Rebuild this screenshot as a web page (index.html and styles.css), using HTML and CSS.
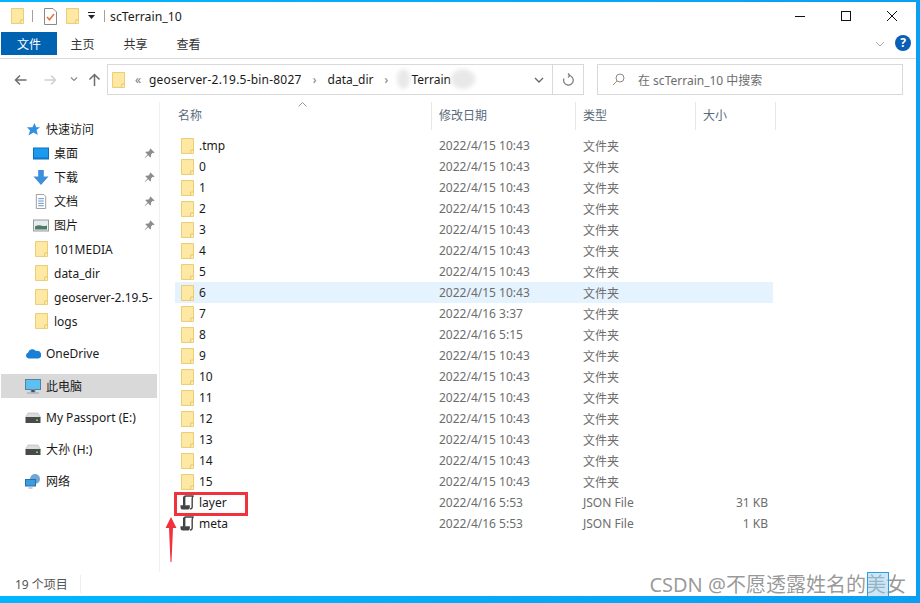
FILE: index.html
```html
<!DOCTYPE html>
<html lang="zh-CN">
<head>
  <meta charset="UTF-8" />
  <title>scTerrain_10</title>
  <link rel="stylesheet" href="styles.css">
</head>
<body>

<svg class="defs" width="0" height="0">
  <symbol id="folder" viewBox="0 0 14 17">
    <path d="M.5.5h13v12.5h-3v3.500H.5z" fill="#fde8a4" stroke="#e9c868"/>
    <path d="M10.500 16.500v-3.500h3v3.500z" fill="#fff3c4" stroke="#e9c868"/>
  </symbol>
  <symbol id="json" viewBox="0 0 16 16">
    <path d="M4 12V3.500Q4 1 6.500 1H14.500Q13 1.500 13 4V12.500Q13 15 10.500 15" fill="#fff" stroke="#444" stroke-width="1.500"/>
    <path d="M4.500 2V11" stroke="#444" stroke-width="2.500"/>
    <path d="M.5 11H10.500V12.500Q10.500 15.500 8 15.500H3Q.5 15.500 .5 13z" fill="#444"/>
  </symbol>
  <symbol id="pin" viewBox="0 0 12 12">
    <path d="M7 .5l4.500 4.500-1.200.6-.8-.3-2 2 .2 2.200-.8.8-2.400-2.500L1 11l-.3-.3 3.200-3.600L1.500 4.700l.8-.8 2.200.2 2-2-.3-.8z" fill="#8c8c8c"/>
  </symbol>
  <symbol id="drive" viewBox="0 0 16 12">
    <path d="M3 1.500h10l2.500 4.500h-15z" fill="#dcdcdc" stroke="#b5b5b5" stroke-width=".6"/>
    <rect x=".5" y="5.500" width="15" height="6" fill="#4a4a4a"/>
    <rect x="11" y="8" width="2" height="1.500" fill="#5fe05f"/>
  </symbol>
</svg>

<div class="window">

  <div class="titlebar">
    <svg class="ico-folder qa-first"><use href="#folder"/></svg>
    <span class="qa-sep"></span>
    <svg class="ico-doc" viewBox="0 0 13 17">
      <path d="M.5.500h8.500l3.500 3.500v12.500H.5z" fill="#fff" stroke="#8a8a8a"/>
      <path d="M3 9l2.500 2.800L10 6" fill="none" stroke="#e8703a" stroke-width="1.500"/>
    </svg>
    <svg class="ico-folder qa-next"><use href="#folder"/></svg>
    <svg class="qa-drop" viewBox="0 0 9 8">
      <rect x="1" y="0" width="7" height="1" fill="#222"/>
      <path d="M1 3h7L4.500 7z" fill="#222"/>
    </svg>
    <span class="qa-sep"></span>
    <span class="title">scTerrain_10</span>
    <div class="win-btns">
      <svg width="12" height="12" viewBox="0 0 12 12"><path d="M1 6.500h10" stroke="#111"/></svg>
      <svg width="12" height="12" viewBox="0 0 12 12"><rect x="1.500" y="1.500" width="9" height="9" fill="none" stroke="#111"/></svg>
      <svg width="12" height="12" viewBox="0 0 12 12"><path d="M1 1l10 10M11 1L1 11" stroke="#111"/></svg>
    </div>
  </div>

  <div class="ribbon">
    <span class="tab tab-file">文件</span>
    <span class="tab">主页</span>
    <span class="tab">共享</span>
    <span class="tab">查看</span>
    <svg class="ribbon-chev" viewBox="0 0 10 6"><path d="M1 1l4 4 4-4" fill="none" stroke="#a5a5a5"/></svg>
    <span class="help">?</span>
  </div>

  <div class="nav">
    <div class="nav-btns">
      <svg class="nav-back" viewBox="0 0 13 12"><path d="M12.500 6H1.500M6 1.500L1.500 6 6 10.500" fill="none" stroke="#6d6d6d" stroke-width="1.500"/></svg>
      <svg class="nav-fwd" viewBox="0 0 13 12"><path d="M.5 6h11M7 1.500L11.500 6 7 10.500" fill="none" stroke="#cfcfcf" stroke-width="1.500"/></svg>
      <svg class="nav-drop" viewBox="0 0 8 5"><path d="M1 .5l3 3 3-3" fill="none" stroke="#8a8a8a" stroke-width="1.200"/></svg>
      <svg class="nav-up" viewBox="0 0 13 13"><path d="M6.500 13V2M1.500 6.500l5-5 5 5" fill="none" stroke="#6d6d6d" stroke-width="1.500"/></svg>
    </div>
    <div class="address">
      <svg class="ico-folder addr-folder"><use href="#folder"/></svg>
      <span class="addr-more">«</span>
      <span class="crumb crumb-first">geoserver-2.19.5-bin-8027</span>
      <span class="addr-gt">›</span>
      <span class="crumb">data_dir</span>
      <span class="addr-gt">›</span>
      <span class="crumb crumb-hidden">Terrain</span>
      <svg class="addr-chev" viewBox="0 0 10 6"><path d="M1 1l4 4 4-4" fill="none" stroke="#666" stroke-width="1.300"/></svg>
      <span class="addr-refresh">
        <svg width="12" height="14" viewBox="0 0 12 14"><path d="M6.500 2.500A4.800 4.800 0 1 1 2 5.500M6 .5l2 2-2 2" fill="none" stroke="#7a7a7a" stroke-width="1.200"/></svg>
      </span>
    </div>
    <div class="search">
      <svg width="13" height="13" viewBox="0 0 13 13"><circle cx="8" cy="5" r="4" fill="none" stroke="#8a8a8a"/><path d="M5 8l-4 4" stroke="#b08a5a"/></svg>
      <span>在 scTerrain_10 中搜索</span>
    </div>
  </div>

  <div class="content">
    <div class="sidebar">
      <div class="side-row top">
        <svg class="side-ico" viewBox="0 0 16 14"><path d="M9.500.5l1.700 4.200H15l-3.400 2.900 1.200 4.900L8.500 10 3.500 13l1.600-5L2 4.700h5.500z" fill="#2f8fe0"/></svg>
        <span>快速访问</span>
      </div>
      <div class="side-row sub">
        <svg class="side-ico" viewBox="0 0 16 12"><rect x=".5" y=".5" width="15" height="11" fill="#1b9af0" stroke="#0f6fb8"/><path d="M1 10.500h14" stroke="#0f6fb8"/></svg>
        <span>桌面</span>
        <svg class="pin"><use href="#pin"/></svg>
      </div>
      <div class="side-row sub">
        <svg class="side-ico" viewBox="0 0 16 16"><path d="M5 0h6v7h5l-8 9-8-9h5z" fill="#3d8fdc"/></svg>
        <span>下载</span>
        <svg class="pin"><use href="#pin"/></svg>
      </div>
      <div class="side-row sub">
        <svg class="side-ico" viewBox="0 0 16 16"><path d="M3 .5h8l2 2v13H3z" fill="#fff" stroke="#999"/><path d="M5 5h6M5 7.500h6M5 10h6M5 12.500h6" stroke="#5a8fc0"/></svg>
        <span>文档</span>
        <svg class="pin"><use href="#pin"/></svg>
      </div>
      <div class="side-row sub">
        <svg class="side-ico" viewBox="0 0 16 12"><rect x=".5" y=".5" width="15" height="11" fill="#e4edf0" stroke="#9a9a9a"/><path d="M2 7q3-2 6-1t6 0v4H2z" fill="#4e7a68"/></svg>
        <span>图片</span>
        <svg class="pin"><use href="#pin"/></svg>
      </div>
      <div class="side-row sub">
        <svg class="ico-folder side-folder"><use href="#folder"/></svg>
        <span>101MEDIA</span>
      </div>
      <div class="side-row sub">
        <svg class="ico-folder side-folder"><use href="#folder"/></svg>
        <span>data_dir</span>
      </div>
      <div class="side-row sub">
        <svg class="ico-folder side-folder"><use href="#folder"/></svg>
        <span>geoserver-2.19.5-</span>
      </div>
      <div class="side-row sub">
        <svg class="ico-folder side-folder"><use href="#folder"/></svg>
        <span>logs</span>
      </div>

      <div class="side-row top group">
        <svg class="side-ico" viewBox="0 0 16 10"><path d="M3.500 10A3 3 0 0 1 3 4.200 4.500 4.500 0 0 1 11 2.500 3.800 3.800 0 0 1 13.500 10z" fill="#1a7fd4"/></svg>
        <span>OneDrive</span>
      </div>
      <div class="side-row top group current">
        <svg class="side-ico" viewBox="0 0 16 15"><rect x=".5" y=".5" width="15" height="10" fill="#5cc0f2" stroke="#5a7f9a"/><path d="M6 11h4v2H6zM2 14h12" stroke="#8aa0b0"/></svg>
        <span>此电脑</span>
      </div>
      <div class="side-row top group">
        <svg class="side-ico"><use href="#drive"/></svg>
        <span>My Passport (E:)</span>
      </div>
      <div class="side-row top group">
        <svg class="side-ico"><use href="#drive"/></svg>
        <span>大孙 (H:)</span>
      </div>
      <div class="side-row top group">
        <svg class="side-ico" viewBox="0 0 16 15"><circle cx="10" cy="5" r="5" fill="#6fa8d8"/><rect x=".5" y="5.500" width="10" height="6.500" fill="#3d9be0" stroke="#2a6fa8"/><path d="M3.500 14h4" stroke="#8aa0b0"/></svg>
        <span>网络</span>
      </div>
    </div>

    <div class="main">
      <div class="list-head">
        <span class="col-name">名称</span>
        <span class="col-date">修改日期</span>
        <span class="col-type">类型</span>
        <span class="col-size">大小</span>
        <svg class="sort-caret" viewBox="0 0 9 5"><path d="M.5 4.500l4-4 4 4" fill="none" stroke="#9a9a9a"/></svg>
      </div>
      <div class="rows">
        <div class="row"><span class="name"><svg class="ico-folder"><use href="#folder"/></svg>.tmp</span><span>2022/4/15 10:43</span><span>文件夹</span><span></span></div>
        <div class="row"><span class="name"><svg class="ico-folder"><use href="#folder"/></svg>0</span><span>2022/4/15 10:43</span><span>文件夹</span><span></span></div>
        <div class="row"><span class="name"><svg class="ico-folder"><use href="#folder"/></svg>1</span><span>2022/4/15 10:43</span><span>文件夹</span><span></span></div>
        <div class="row"><span class="name"><svg class="ico-folder"><use href="#folder"/></svg>2</span><span>2022/4/15 10:43</span><span>文件夹</span><span></span></div>
        <div class="row"><span class="name"><svg class="ico-folder"><use href="#folder"/></svg>3</span><span>2022/4/15 10:43</span><span>文件夹</span><span></span></div>
        <div class="row"><span class="name"><svg class="ico-folder"><use href="#folder"/></svg>4</span><span>2022/4/15 10:43</span><span>文件夹</span><span></span></div>
        <div class="row"><span class="name"><svg class="ico-folder"><use href="#folder"/></svg>5</span><span>2022/4/15 10:43</span><span>文件夹</span><span></span></div>
        <div class="row hover"><span class="name"><svg class="ico-folder"><use href="#folder"/></svg>6</span><span>2022/4/15 10:43</span><span>文件夹</span><span></span></div>
        <div class="row"><span class="name"><svg class="ico-folder"><use href="#folder"/></svg>7</span><span>2022/4/16 3:37</span><span>文件夹</span><span></span></div>
        <div class="row"><span class="name"><svg class="ico-folder"><use href="#folder"/></svg>8</span><span>2022/4/16 5:15</span><span>文件夹</span><span></span></div>
        <div class="row"><span class="name"><svg class="ico-folder"><use href="#folder"/></svg>9</span><span>2022/4/15 10:43</span><span>文件夹</span><span></span></div>
        <div class="row"><span class="name"><svg class="ico-folder"><use href="#folder"/></svg>10</span><span>2022/4/15 10:43</span><span>文件夹</span><span></span></div>
        <div class="row"><span class="name"><svg class="ico-folder"><use href="#folder"/></svg>11</span><span>2022/4/15 10:43</span><span>文件夹</span><span></span></div>
        <div class="row"><span class="name"><svg class="ico-folder"><use href="#folder"/></svg>12</span><span>2022/4/15 10:43</span><span>文件夹</span><span></span></div>
        <div class="row"><span class="name"><svg class="ico-folder"><use href="#folder"/></svg>13</span><span>2022/4/15 10:43</span><span>文件夹</span><span></span></div>
        <div class="row"><span class="name"><svg class="ico-folder"><use href="#folder"/></svg>14</span><span>2022/4/15 10:43</span><span>文件夹</span><span></span></div>
        <div class="row"><span class="name"><svg class="ico-folder"><use href="#folder"/></svg>15</span><span>2022/4/15 10:43</span><span>文件夹</span><span></span></div>
        <div class="row"><span class="name"><svg class="ico-json"><use href="#json"/></svg>layer</span><span>2022/4/16 5:53</span><span>JSON File</span><span class="size">31 KB</span></div>
        <div class="row"><span class="name"><svg class="ico-json"><use href="#json"/></svg>meta</span><span>2022/4/16 5:53</span><span>JSON File</span><span class="size">1 KB</span></div>
      </div>
    </div>
  </div>

  <div class="status"><span class="status-count">19 个项目</span></div>

  <!-- annotations drawn over the screenshot -->
  <div class="mark-box"></div>
  <svg class="mark-arrow" viewBox="0 0 12 45"><path d="M6 0l5.500 11H8L6.500 45h-1L4 11H.5z" fill="#f0323c"/></svg>
  <div class="watermark">CSDN @不愿透露姓名的美女</div>
  <div class="watermark-sel"></div>
</div>

</body>
</html>
```

FILE: styles.css
```css
* { box-sizing: border-box; }

html, body {
  margin: 0;
  height: 100%;
  overflow: hidden;
}

body {
  font-family: "Noto Sans", "Noto Sans CJK SC", sans-serif;
  font-size: 12px;
  color: #1a1a1a;
}

.defs { position: absolute; }

.window {
  position: relative;
  width: 920px;
  height: 603px;
  padding: 2px 4px 7px 0;
  background: linear-gradient(90deg, #00b6ff, #0a9ff2);
  display: flex;
  flex-direction: column;
}

.window > div:not(.mark-box):not(.watermark):not(.watermark-sel) { background: #fff; }

.ico-folder { width: 13px; height: 16px; flex: none; display: block; }
.ico-json { width: 15px; height: 15px; flex: none; display: block; margin-left: -1px; margin-right: -1px; }

/* title bar */
.titlebar {
  height: 30px;
  flex: none;
  display: flex;
  align-items: center;
  padding-bottom: 2px;
}

.qa-first { margin-left: 11px; }
.qa-sep { width: 1px; height: 12px; background: #a0a0a0; margin-left: 8px; }
.ico-doc { width: 13px; height: 17px; margin-left: 11px; }
.qa-next { margin-left: 9px; }
.qa-drop { width: 9px; height: 8px; margin-left: 8px; }
.title { margin-left: 5px; font-size: 12.300px; }

.win-btns {
  margin-left: auto;
  margin-right: 18px;
  display: flex;
  gap: 34px;
}

/* ribbon tabs */
.ribbon {
  height: 27px;
  flex: none;
  display: flex;
  align-items: flex-start;
  padding-left: 1px;
  border-bottom: 1px solid #dadada;
}

.tab {
  width: 53px;
  height: 23px;
  line-height: 26px;
  text-align: center;
  color: #333;
}

.tab-file {
  width: 56px;
  background: #0063b1;
  color: #fff;
  margin-right: -1px;
}

.ribbon-chev { width: 10px; height: 6px; margin: 9px 0 0 auto; }

.help {
  width: 16px;
  height: 16px;
  margin: 3px 5px 0 10px;
  border-radius: 50%;
  background: #0a5fb4;
  color: #fff;
  font-size: 12px;
  font-weight: 700;
  line-height: 16px;
  text-align: center;
}

/* navigation row */
.nav {
  height: 43px;
  flex: none;
  display: flex;
  padding-top: 5px;
  padding-bottom: 7px;
}

.nav-btns {
  width: 107px;
  display: flex;
  align-items: center;
}

.nav-back { width: 13px; height: 12px; margin-left: 14px; }
.nav-fwd { width: 13px; height: 12px; margin-left: 17px; }
.nav-drop { width: 8px; height: 5px; margin-left: 13px; }
.nav-up { width: 13px; height: 13px; margin-left: 10px; }

.address {
  width: 477px;
  border: 1px solid #d9d9d9;
  display: flex;
  align-items: center;
  padding-left: 4px;
}

.addr-more { margin-left: 10px; color: #777; width: 14px; }
.crumb-first { letter-spacing: 0.2px; }
.addr-gt { width: 26px; text-align: center; color: #777; }

.crumb-hidden { position: relative; margin-left: 12px; }

.crumb-hidden::before,
.crumb-hidden::after {
  content: "";
  position: absolute;
  top: -2px;
  height: 20px;
  border-radius: 50%;
  background: #e8e8e8;
  filter: blur(2px);
}

.crumb-hidden::before { left: -14px; width: 13px; }
.crumb-hidden::after { right: -24px; width: 24px; }

.addr-chev { width: 10px; height: 6px; margin-left: auto; margin-right: 8px; }

.addr-refresh {
  width: 31px;
  align-self: stretch;
  border-left: 1px solid #d9d9d9;
  display: flex;
  align-items: center;
  justify-content: center;
}

.search {
  width: 306px;
  margin-left: 13px;
  border: 1px solid #d9d9d9;
  display: flex;
  align-items: center;
  gap: 13px;
  padding-left: 14px;
  color: #6d6d6d;
}

/* sidebar + list */
.content {
  flex: 1;
  display: flex;
  min-height: 0;
}

.sidebar {
  width: 160px;
  flex: none;
  padding: 15px 0 0 1px;
  border-right: 1px solid #f0f0f0;
}

.side-row {
  height: 24px;
  width: 156px;
  display: flex;
  align-items: center;
  position: relative;
}

.side-row.top { padding-left: 24px; }
.side-row.top .side-ico { margin-right: 5px; }
.side-row.sub { padding-left: 32px; }
.side-row.sub .side-ico { margin-right: 5px; }
.side-row.group { margin-top: 8px; }
.side-row.current { background: #d9d9d9; top: 1px; }

.side-ico { width: 16px; height: 15px; flex: none; display: block; }
.side-folder { margin-left: 2px; margin-right: 6px; }

.side-row.sub > span { white-space: nowrap; }

.pin {
  width: 11px;
  height: 11px;
  position: absolute;
  left: 143px;
  top: 7px;
}

.main {
  flex: 1;
  min-width: 0;
}

.list-head {
  position: relative;
  height: 28px;
  margin-bottom: 5px;
  display: flex;
  color: #5a6a7c;
}

.list-head span {
  display: flex;
  align-items: center;
  padding-bottom: 3px;
  padding-left: 7px;
  border-right: 1px solid #e8e8e8;
}

.col-name { width: 272px; padding-left: 18px !important; }
.col-date { width: 144px; }
.col-type { width: 120px; }
.col-size { width: 80px; }

.sort-caret {
  position: absolute;
  left: 138px;
  top: 0;
  width: 9px;
  height: 5px;
}

.rows { padding-left: 15px; }

.row {
  width: 598px;
  height: 21px;
  padding-left: 6px;
  display: grid;
  grid-template-columns: 258px 144px 113px 72px;
  align-items: center;
  color: #6d6d6d;
}

.row.hover { background: #e5f3ff; }

.name {
  display: flex;
  align-items: center;
  gap: 5px;
  color: #1a1a1a;
}

.size { text-align: right; }

.status {
  height: 24px;
  flex: none;
  padding-left: 15px;
  display: flex;
  align-items: center;
  color: #555;
}

.status-count {
  padding-right: 12px;
  border-right: 1px solid #eee;
}

/* annotations over the screenshot */
.mark-box {
  position: absolute;
  left: 174px;
  top: 492px;
  width: 74px;
  height: 24px;
  border: 3px solid #f0323c;
}

.mark-arrow {
  position: absolute;
  left: 165px;
  top: 517px;
  width: 12px;
  height: 45px;
}

.watermark {
  position: absolute;
  right: 14px;
  top: 571px;
  font-size: 20px;
  line-height: 28px;
  color: rgba(120, 120, 120, 0.75);
  white-space: nowrap;
}

.watermark-sel {
  position: absolute;
  left: 867px;
  top: 572px;
  width: 22px;
  height: 25px;
  background: rgba(150, 205, 240, 0.5);
  border: 1px solid #2a9fe0;
}
```
